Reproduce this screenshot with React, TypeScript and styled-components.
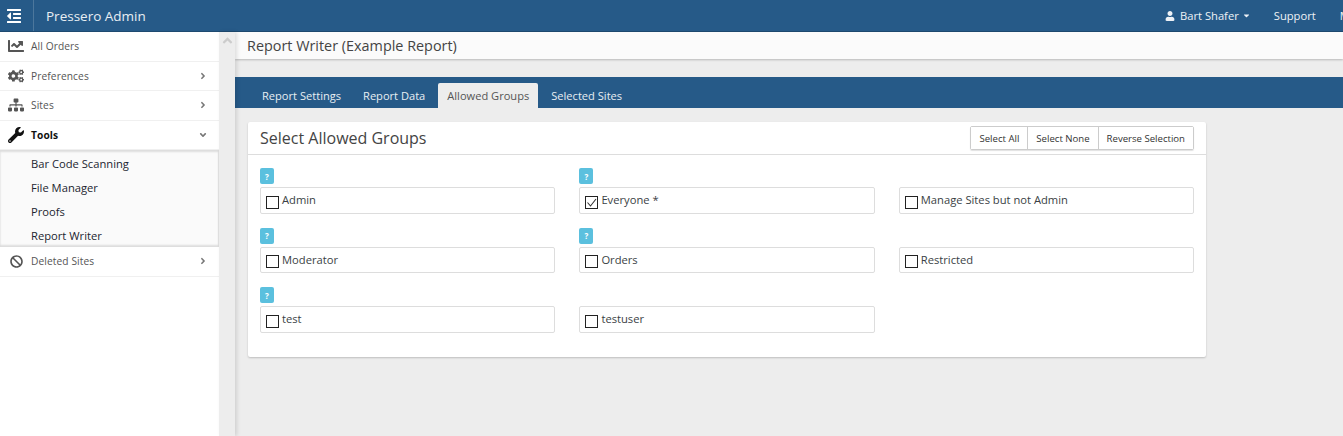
import { FC } from 'react';
import styled, { createGlobalStyle } from 'styled-components';
import {
  FaAngleDown,
  FaAngleRight,
  FaAngleUp,
  FaBan,
  FaCaretDown,
  FaChartLine,
  FaCogs,
  FaOutdent,
  FaSitemap,
  FaUser,
  FaWrench,
} from 'react-icons/fa';

const BLUE = '#265a88';
const SANS = '"Open Sans", "Liberation Sans", sans-serif';

const GlobalStyle = createGlobalStyle`
  html, body {
    margin: 0;
    height: 100%;
    overflow: hidden;
    background: #ededed;
  }
  body {
    font-family: ${SANS};
    color: #333;
  }
  * { box-sizing: border-box; }
`;

const Page = styled.div`
  width: 1343px;
  height: 436px;
  display: flex;
  flex-direction: column;
  overflow: hidden;
`;

const TopBar = styled.header`
  flex: 0 0 32px;
  display: flex;
  align-items: center;
  background: ${BLUE};
  border-bottom: 1px solid #1e4a70;
  color: #fff;
  white-space: nowrap;
`;

const MenuToggle = styled.div`
  flex: 0 0 34px;
  height: 31px;
  display: flex;
  align-items: center;
  justify-content: center;
  border-right: 1px solid #4c779c;
  font-size: 16px;
  padding-right: 5px;
`;

const Brand = styled.div`
  margin-left: 12px;
  font-size: 13.5px;
  color: #e8eef3;
  flex: 1;
`;

const TopLink = styled.div`
  display: flex;
  align-items: center;
  gap: 5px;
  font-size: 11.2px;
  color: #eef2f6;
`;

const UserCaret = styled(FaCaretDown)`
  margin: 0 -1px 0 -2px;
`;

const TopLinks = styled.nav`
  display: flex;
  align-items: center;
  gap: 24px;
  width: 178px;
  flex: 0 0 178px;
  overflow: hidden;
`;

const Body = styled.div`
  flex: 1;
  display: flex;
  min-height: 0;
`;

const Sidebar = styled.aside`
  flex: 0 0 219px;
  background: #fff;
`;

const NavItem = styled.div<{ $active?: boolean }>`
  height: 29.5px;
  display: flex;
  align-items: center;
  padding: 0 11px 0 8px;
  border-bottom: 1px solid #f0f0f0;
  font-size: 10.2px;
  letter-spacing: 0.1px;
  font-weight: ${(props) => (props.$active ? 700 : 400)};
  color: ${(props) => (props.$active ? '#111' : '#555')};
`;

const NavIcon = styled.span<{ $active?: boolean; $small?: boolean }>`
  flex: 0 0 23px;
  display: flex;
  align-items: center;
  padding-left: ${(props) => (props.$small ? '2px' : '0')};
  font-size: ${(props) => (props.$small ? '13px' : '16px')};
  color: ${(props) => (props.$active ? '#111' : '#555')};
`;

const NavLabel = styled.span`
  flex: 1;
`;

const NavChevron = styled.span`
  display: flex;
  font-size: 10px;
  color: #777;
`;

const SubMenu = styled.div`
  height: 97px;
  background: #fafafa;
  padding-top: 1px;
  box-shadow: inset 0 2px 2px #ddd, inset 0 -2px 2px #ddd, inset -1px 0 1px #e4e4e4;
`;

const SubItem = styled.div`
  height: 24px;
  display: flex;
  align-items: center;
  padding-left: 31px;
  font-size: 11.2px;
  color: #1c2530;
`;

const ScrollRail = styled.div`
  flex: 0 0 16px;
  position: relative;
  z-index: 1;
  display: flex;
  justify-content: center;
  padding-top: 1px;
  font-size: 15px;
  color: #ccc;
  background: #ededed;
  box-shadow: 2px 0 4px rgba(0, 0, 0, 0.12);
`;

const Main = styled.main`
  flex: 1;
  min-width: 0;
`;

const TitleBar = styled.div`
  height: 27px;
  display: flex;
  align-items: center;
  padding-left: 12px;
  background: #fbfbfb;
  box-shadow: 0 1px 2px rgba(0, 0, 0, 0.22);
  font-size: 14.4px;
  color: #444;
`;

const TabBar = styled.div`
  margin-top: 18px;
  height: 31px;
  display: flex;
  align-items: flex-end;
  padding-left: 16px;
  background: ${BLUE};
`;

const Tab = styled.div<{ $active?: boolean }>`
  height: 25px;
  display: flex;
  align-items: center;
  padding: 0 ${(props) => (props.$active ? '9px' : '11px')};
  margin: 0 ${(props) => (props.$active ? '2px' : '0')};
  border-radius: 2px 2px 0 0;
  font-size: 11.1px;
  background: ${(props) => (props.$active ? '#ededed' : 'transparent')};
  color: ${(props) => (props.$active ? '#555' : '#e8eef3')};
`;

const Panel = styled.section`
  width: 958px;
  height: 235px;
  margin: 14px 0 0 13px;
  background: #fff;
  border-radius: 2px;
  box-shadow: 0 1px 2px rgba(0, 0, 0, 0.2);
`;

const PanelHeader = styled.div`
  height: 33px;
  display: flex;
  align-items: center;
  justify-content: space-between;
  padding: 0 12px;
  border-bottom: 1px solid #ddd;
`;

const PanelTitle = styled.h2`
  margin: 0;
  font-size: 16px;
  font-weight: 400;
  color: #444;
`;

const ButtonGroup = styled.div`
  display: flex;
  border: 1px solid #ccc;
  border-radius: 2px;
  box-shadow: 0 1px 1px rgba(0, 0, 0, 0.12);
`;

const GroupButton = styled.button`
  height: 22px;
  padding: 0 8px;
  border: 0;
  background: #fff;
  font-family: ${SANS};
  font-size: 9.6px;
  color: #333;
  & + & {
    border-left: 1px solid #ccc;
  }
`;

const GroupGrid = styled.div`
  display: grid;
  grid-template-columns: repeat(3, 295.4px);
  column-gap: 24px;
  row-gap: 14px;
  padding: 13px 12px 0;
`;

const GroupCell = styled.div`
  display: flex;
  flex-direction: column;
`;

const HelpSlot = styled.div`
  height: 19px;
`;

const HelpBadge = styled.span`
  display: flex;
  align-items: center;
  justify-content: center;
  width: 14px;
  height: 16px;
  border-radius: 2px;
  background: #5bc0de;
  color: #fff;
  font-size: 8px;
  font-weight: 700;
`;

const GroupBox = styled.label`
  height: 26.5px;
  display: flex;
  align-items: flex-start;
  padding: 4.4px 0 0 5px;
  border: 1px solid #ddd;
  border-radius: 2px;
  font-size: 11.2px;
  line-height: 15px;
  color: #3a3f45;
`;

const CheckBox = styled.span`
  flex: 0 0 13px;
  width: 13px;
  height: 13px;
  margin: 3.6px 3px 0 0;
  display: flex;
  align-items: center;
  justify-content: center;
  border: 1px solid #222;
  background: #fff;
`;

type TNavItem = {
  label: string;
  icon: FC;
  chevron?: 'right' | 'down';
  active?: boolean;
  smallIcon?: boolean;
};

type TGroup = {
  name: string;
  help?: boolean;
  checked?: boolean;
};

const topItems: TNavItem[] = [
  { label: 'All Orders', icon: FaChartLine },
  { label: 'Preferences', icon: FaCogs, chevron: 'right' },
  { label: 'Sites', icon: FaSitemap, chevron: 'right' },
  { label: 'Tools', icon: FaWrench, chevron: 'down', active: true },
];

const subItems = ['Bar Code Scanning', 'File Manager', 'Proofs', 'Report Writer'];

const tabs = ['Report Settings', 'Report Data', 'Allowed Groups', 'Selected Sites'];

const groups: TGroup[] = [
  { name: 'Admin', help: true },
  { name: 'Everyone *', help: true, checked: true },
  { name: 'Manage Sites but not Admin' },
  { name: 'Moderator', help: true },
  { name: 'Orders', help: true },
  { name: 'Restricted' },
  { name: 'test', help: true },
  { name: 'testuser' },
];

const SideLink: FC<TNavItem> = ({ label, icon: Icon, chevron, active, smallIcon }) => (
  <NavItem $active={active}>
    <NavIcon $active={active} $small={smallIcon}>
      <Icon />
    </NavIcon>
    <NavLabel>{label}</NavLabel>
    {chevron && <NavChevron>{chevron === 'right' ? <FaAngleRight /> : <FaAngleDown />}</NavChevron>}
  </NavItem>
);

const Group: FC<TGroup> = ({ name, help, checked }) => (
  <GroupCell>
    <HelpSlot>{help && <HelpBadge>?</HelpBadge>}</HelpSlot>
    <GroupBox>
      <CheckBox>
        {checked && (
          <svg viewBox="0 0 11 11" width="11" height="11">
            <path d="M1.5 5.5 L4.5 9 L10 2" fill="none" stroke="#333" strokeWidth="1.1" />
          </svg>
        )}
      </CheckBox>
      {name}
    </GroupBox>
  </GroupCell>
);

const App: FC = () => (
  <Page>
    <GlobalStyle />
    <TopBar>
      <MenuToggle>
        <FaOutdent />
      </MenuToggle>
      <Brand>Pressero Admin</Brand>
      <TopLinks>
        <TopLink>
          <FaUser size={10} />
          Bart Shafer
          <UserCaret size={9} />
        </TopLink>
        <TopLink>Support</TopLink>
        <TopLink>My Account</TopLink>
      </TopLinks>
    </TopBar>
    <Body>
      <Sidebar>
        {topItems.map((item) => (
          <SideLink key={item.label} {...item} />
        ))}
        <SubMenu>
          {subItems.map((item) => (
            <SubItem key={item}>{item}</SubItem>
          ))}
        </SubMenu>
        <SideLink label="Deleted Sites" icon={FaBan} chevron="right" smallIcon />
      </Sidebar>
      <ScrollRail>
        <FaAngleUp />
      </ScrollRail>
      <Main>
        <TitleBar>Report Writer (Example Report)</TitleBar>
        <TabBar>
          {tabs.map((tab) => (
            <Tab key={tab} $active={tab === 'Allowed Groups'}>
              {tab}
            </Tab>
          ))}
        </TabBar>
        <Panel>
          <PanelHeader>
            <PanelTitle>Select Allowed Groups</PanelTitle>
            <ButtonGroup>
              <GroupButton>Select All</GroupButton>
              <GroupButton>Select None</GroupButton>
              <GroupButton>Reverse Selection</GroupButton>
            </ButtonGroup>
          </PanelHeader>
          <GroupGrid>
            {groups.map((group) => (
              <Group key={group.name} {...group} />
            ))}
          </GroupGrid>
        </Panel>
      </Main>
    </Body>
  </Page>
);

export default App;
